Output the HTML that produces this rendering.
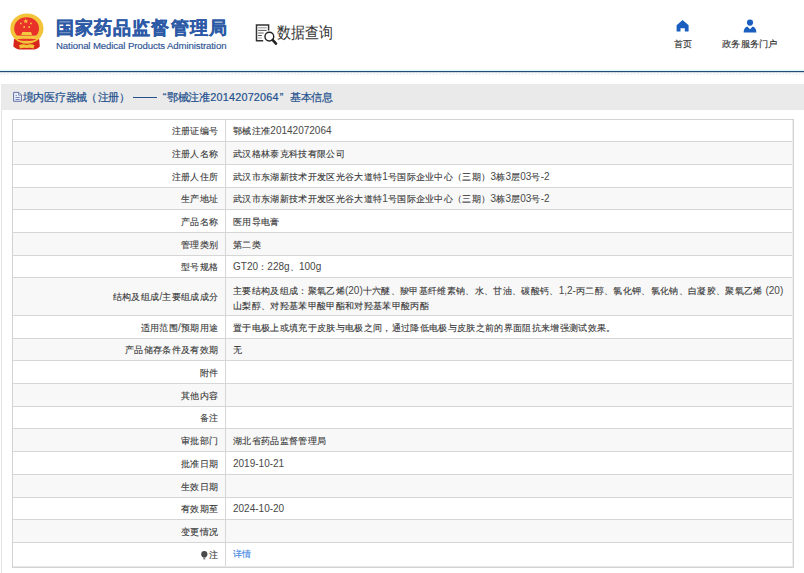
<!DOCTYPE html>
<html><head><meta charset="utf-8">
<style>
*{margin:0;padding:0;box-sizing:border-box}
html,body{width:804px;height:573px;overflow:hidden;background:#fff;font-family:"Liberation Sans",sans-serif;color:#333}
.abs{position:absolute}
#title{left:56px;top:15px;font-size:17.6px;font-weight:bold;color:#2d5aa6;white-space:nowrap;letter-spacing:1.1px;line-height:26px;-webkit-text-stroke:0.35px #2d5aa6}
#en{left:56px;top:39.5px;font-size:9.6px;letter-spacing:-0.1px;color:#2e5394;white-space:nowrap;line-height:12px;-webkit-text-stroke:0.15px #2e5394}
#sq{left:277px;top:21.5px;font-size:14.5px;color:#333;white-space:nowrap;line-height:20px;transform-origin:0 0;transform:scale(0.94,1.08)}
.nav{font-size:9.3px;color:#333;white-space:nowrap;line-height:12px;-webkit-text-stroke:0.15px #333}
#line{left:0;top:71px;width:804px;height:1px;background:#234a77;box-shadow:0 1px 0 rgba(39,80,125,0.22)}
#cyan{left:0;top:69px;width:804px;height:2px;background:linear-gradient(#f4fdfd 50%,#e0f8f9 50%)}
#hatch{left:0;top:73px;width:804px;height:2px}
#panel{left:1px;top:84px;width:803px;height:489px;border-left:1px solid #e3e3e3}
#bar{left:1px;top:84px;width:803px;height:26px;background:#eaeaea}
#bartxt{font-size:10.8px;color:#24518e;white-space:nowrap;line-height:16px;-webkit-text-stroke:0.2px #24518e}
#bartxt span{position:absolute;top:0}
.row{position:absolute;left:12px;width:782px;border-top:1px solid #d6d6d6;display:flex;align-items:center}
.row.g{background:#f8f8f8}
.lab{position:relative;top:1px;width:213px;padding-right:6.8px;font-size:9.35px;letter-spacing:0.33px;color:#333;white-space:nowrap;text-align:right;line-height:14.67px;-webkit-text-stroke:0.1px #3a3a3a}
.val{position:relative;top:1px;padding-left:8px;font-size:9.35px;letter-spacing:0.33px;color:#333;white-space:nowrap;line-height:14.67px;-webkit-text-stroke:0.1px #3a3a3a}
.val i,.lab i{font-style:normal;font-size:10px;letter-spacing:0;position:relative;top:0px;line-height:0;-webkit-text-stroke:0;color:#484848}
</style></head><body>
<!-- emblem -->
<svg class="abs" style="left:0;top:0" width="50" height="55" viewBox="0 0 50 55">
  <path d="M14 39 L13.3 46.5 L16 48.5 L19 49.6 L34.5 49.6 L37.5 48.5 L39.8 46.5 L39.2 39 Z" fill="#d8261c"/>
  <ellipse cx="26.9" cy="28.6" rx="16.6" ry="15.2" fill="#f3c43a"/>
  <ellipse cx="26.6" cy="28.5" rx="12.4" ry="11.2" fill="#e8322a"/>
  <path d="M21.2 35 L22.3 32.1 H31 L32.1 35 Z" fill="#f5c842"/>
  <rect x="17" y="35.6" width="19.4" height="3.2" fill="#f5c842"/>
  <path d="M17 39 H36.5 Q33 41.5 26.7 40.8 Q20.5 41.5 17 39 Z" fill="#e8322a"/>
  <path d="M19 45.3 Q22.5 43.6 26.7 45 Q31 43.6 34.5 45.3 L33.5 48.5 Q30 47.2 26.7 48 Q23.4 47.2 20 48.5 Z" fill="#f3c43a"/>
  <polygon points="25.8,18.6 26.5,20.4 28.4,20.4 26.9,21.5 27.5,23.3 25.8,22.2 24.1,23.3 24.7,21.5 23.2,20.4 25.1,20.4" fill="#f5c842"/>
  <circle cx="20.8" cy="23.4" r="0.9" fill="#f5c842"/><circle cx="31" cy="23.4" r="0.9" fill="#f5c842"/>
  <circle cx="24.2" cy="27" r="0.9" fill="#f5c842"/><circle cx="29.2" cy="27" r="0.9" fill="#f5c842"/>
</svg>
<div id="title" class="abs">国家药品监督管理局</div>
<div id="en" class="abs">National Medical Products Administration</div>
<!-- search doc icon -->
<svg class="abs" style="left:250px;top:20px" width="30" height="28" viewBox="250 20 30 28">
  <path d="M263.2 40.7 H256.5 V24.9 H268.6 V30.6" fill="none" stroke="#333" stroke-width="1.5"/>
  <path d="M258.1 27.8 h8.6" stroke="#999" stroke-width="1.1"/>
  <path d="M258.1 30.4 h8.6" stroke="#444" stroke-width="0.9"/>
  <path d="M258.1 33 h5.6" stroke="#777" stroke-width="1.1"/>
  <path d="M258.1 35.5 h3.7" stroke="#444" stroke-width="0.9"/>
  <path d="M258.1 38 h3.7" stroke="#aaa" stroke-width="1.1"/>
  <circle cx="269.35" cy="36.6" r="4.4" fill="none" stroke="#222" stroke-width="1.4"/>
  <path d="M272.6 39.9 L276 43.6" stroke="#222" stroke-width="2.6" stroke-linecap="round"/>
</svg>
<div id="sq" class="abs">数据查询</div>
<!-- nav -->
<svg class="abs" style="left:670px;top:15px" width="25" height="20" viewBox="670 15 25 20">
  <path d="M682.6 19.9 L688.6 25.2 V31.6 H684.8 V28.2 H680.5 V31.6 H676.6 V25.2 Z" fill="#1a5fbf"/>
</svg>
<div class="abs nav" style="left:673.5px;top:38px">首页</div>
<svg class="abs" style="left:735px;top:15px" width="30" height="20" viewBox="735 15 30 20">
  <circle cx="750" cy="22.6" r="3.1" fill="#1a5fbf"/>
  <path d="M743.6 32.4 Q743.8 27.6 747.3 26.6 L750 29.2 L752.7 26.6 Q756.2 27.6 756.4 32.4 Z" fill="#1a5fbf"/>
</svg>
<div class="abs nav" style="left:722px;top:38px;transform-origin:0 0;transform:scaleX(1.03)">政务服务门户</div>
<div id="cyan" class="abs"></div>
<div id="line" class="abs"></div>
<svg id="hatch" class="abs" width="804" height="2"><defs><pattern id="hp" width="3.3" height="2" patternUnits="userSpaceOnUse"><path d="M0.4 2 L2 0" stroke="#d9d9d9" stroke-width="0.8"/></pattern></defs><rect width="804" height="2" fill="url(#hp)"/></svg>
<div id="panel" class="abs"></div>
<div id="bar" class="abs"></div>
<svg class="abs" style="left:0;top:0" width="30" height="110" viewBox="0 0 30 110">
  <path d="M13.6 92.4 H18.8 L21.4 95 V101.3 H13.6 Z" fill="#e9effa" stroke="#5b6aa2" stroke-width="0.95" stroke-linejoin="round"/>
  <path d="M18.6 92.6 V95.2 H21.2" fill="none" stroke="#5b6aa2" stroke-width="0.7"/>
  <path d="M15.6 95.5 h1.2 M15.5 97.5 h4.2 M15.5 99.5 h4.2" stroke="#5b6aa2" stroke-width="0.8"/>
</svg>
<div id="bartxt" class="abs" style="left:0;top:89px;width:400px;height:16px">
<span style="left:22.7px;letter-spacing:-0.25px">境内医疗器械</span><span style="left:86.2px">（</span><span style="left:98.3px;letter-spacing:-1.5px">注册</span><span style="left:119px">）</span><span style="left:133.2px;top:8px;width:24px;height:1px;background:#27508a"></span><span style="left:162.8px">“</span><span style="left:167.1px;letter-spacing:-0.4px">鄂械注准</span><span style="left:210.3px;letter-spacing:0.22px">20142072064</span><span style="left:279.7px">”</span><span style="left:290.1px;letter-spacing:-0.35px">基本信息</span></div>

<div id="table">
<div class="row" style="top:119px;height:22px"><div class="lab">注册证编号</div><div class="val">鄂械注准<i>20142072064</i></div></div>
<div class="row g" style="top:141px;height:23px"><div class="lab">注册人名称</div><div class="val">武汉格林泰克科技有限公司</div></div>
<div class="row" style="top:164px;height:23px"><div class="lab">注册人住所</div><div class="val">武汉市东湖新技术开发区光谷大道特<i>1</i>号国际企业中心（三期）<i>3</i>栋<i>3</i>层<i>03</i>号<i>-2</i></div></div>
<div class="row g" style="top:187px;height:22px"><div class="lab">生产地址</div><div class="val">武汉市东湖新技术开发区光谷大道特<i>1</i>号国际企业中心（三期）<i>3</i>栋<i>3</i>层<i>03</i>号<i>-2</i></div></div>
<div class="row" style="top:209px;height:23px"><div class="lab">产品名称</div><div class="val">医用导电膏</div></div>
<div class="row g" style="top:232px;height:23px"><div class="lab">管理类别</div><div class="val">第二类</div></div>
<div class="row" style="top:255px;height:22px"><div class="lab">型号规格</div><div class="val"><i>GT20</i>：<i>228g</i>、<i>100g</i></div></div>
<div class="row g" style="top:277px;height:38px"><div class="lab">结构及组成<i>/</i>主要组成成分</div><div class="val" style="top:2px">主要结构及组成：聚氧乙烯<i>(20)</i>十六醚、羧甲基纤维素钠、水、甘油、碳酸钙、<i>1,2-</i>丙二醇、氯化钾、氯化钠、白凝胶、聚氧乙烯 <i>(20)</i><br>山梨醇、对羟基苯甲酸甲酯和对羟基苯甲酸丙酯</div></div>
<div class="row" style="top:315px;height:23px"><div class="lab">适用范围<i>/</i>预期用途</div><div class="val">置于电极上或填充于皮肤与电极之间，通过降低电极与皮肤之前的界面阻抗来增强测试效果。</div></div>
<div class="row g" style="top:338px;height:22px"><div class="lab">产品储存条件及有效期</div><div class="val">无</div></div>
<div class="row" style="top:360px;height:23px"><div class="lab">附件</div><div class="val"></div></div>
<div class="row g" style="top:383px;height:23px"><div class="lab">其他内容</div><div class="val"></div></div>
<div class="row" style="top:406px;height:22px"><div class="lab">备注</div><div class="val"></div></div>
<div class="row g" style="top:428px;height:23px"><div class="lab">审批部门</div><div class="val">湖北省药品监督管理局</div></div>
<div class="row" style="top:451px;height:23px"><div class="lab">批准日期</div><div class="val"><i>2019-10-21</i></div></div>
<div class="row g" style="top:474px;height:23px"><div class="lab">生效日期</div><div class="val"></div></div>
<div class="row" style="top:497px;height:22px"><div class="lab">有效期至</div><div class="val"><i>2024-10-20</i></div></div>
<div class="row g" style="top:519px;height:23px"><div class="lab">变更情况</div><div class="val"></div></div>
<div class="row" style="top:542px;height:24px"><div class="lab"><svg width="7" height="9" viewBox="0 0 7 9" style="vertical-align:-1.5px;margin-right:1.2px"><circle cx="3.3" cy="3.2" r="3.1" fill="#4a4a4a"/><path d="M0.7 4.6 L2.3 6.6 H4.3 L5.9 4.6 Z" fill="#4a4a4a"/><rect x="2.3" y="7.1" width="2" height="1.3" fill="#777"/></svg>注</div><div class="val"><span style="color:#3a82df;position:relative;top:-1px;-webkit-text-stroke:0.1px #3a82df">详情</span></div></div>
<div class="abs" style="left:225px;top:119px;width:1px;height:447px;background:#d6d6d6"></div>
<div class="abs" style="left:792px;top:120px;width:1px;height:446px;background:#eceef1"></div>
<div class="abs" style="left:13px;top:566px;width:780px;height:1px;background:#e8e8e8"></div>
<div class="abs" style="left:12px;top:119px;width:782px;height:449px;border:1px solid #d3d3d3"></div>
</div>
</body></html>
